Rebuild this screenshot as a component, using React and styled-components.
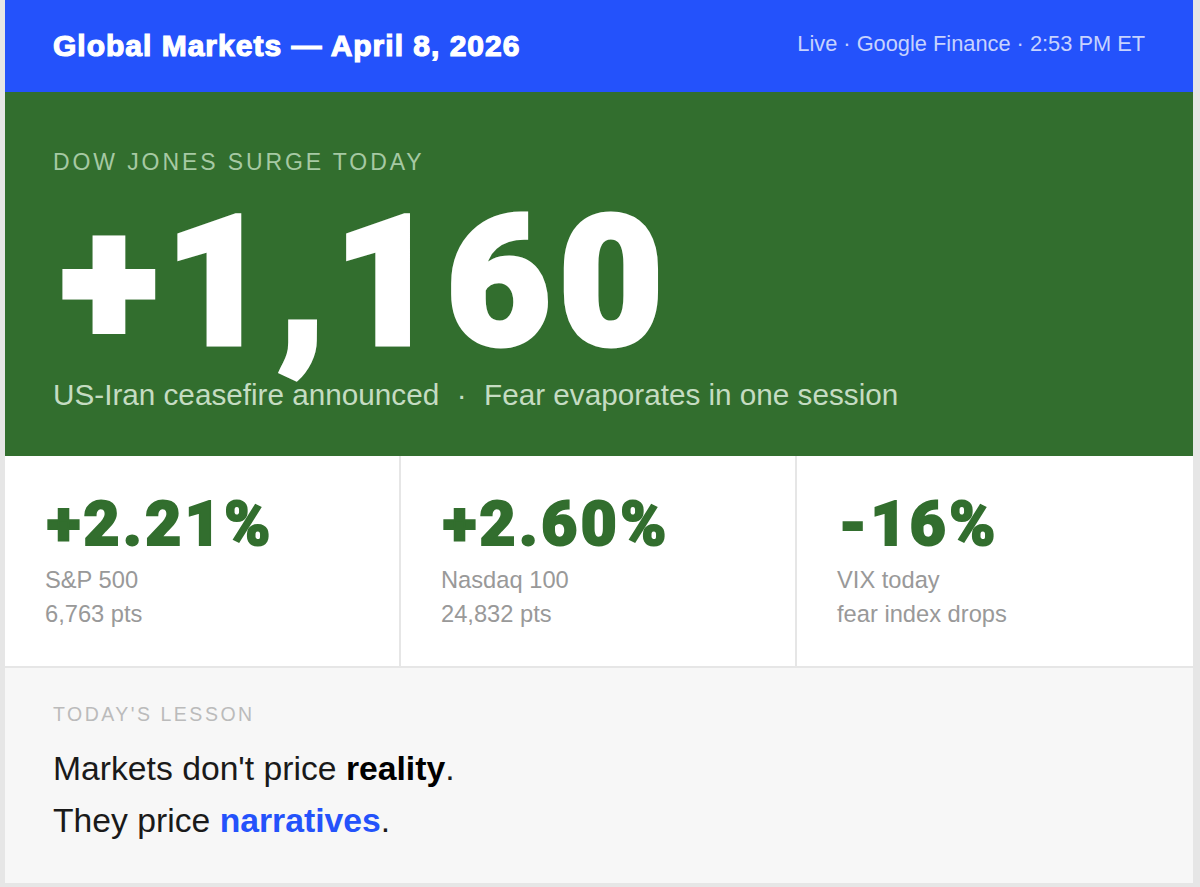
import React from 'react';
import styled, { createGlobalStyle } from 'styled-components';

const GlobalStyle = createGlobalStyle`
  * {
    box-sizing: border-box;
  }
  html, body {
    margin: 0;
    padding: 0;
    background: #e6e6e6;
    font-family: "Liberation Sans", Arial, sans-serif;
  }
`;

const Page = styled.div`
  width: 1200px;
  height: 887px;
  padding: 0 7px 4px 5px;
`;

const Card = styled.div`
  width: 1188px;
  height: 883px;
  background: #fff;
  display: flex;
  flex-direction: column;
`;

const Header = styled.header`
  height: 92px;
  background: #2452fb;
  display: flex;
  align-items: center;
  justify-content: space-between;
  padding: 0 48px;
`;

const Title = styled.h1`
  margin: 0;
  color: #fff;
  font-size: 30px;
  font-weight: 700;
  letter-spacing: 1px;
  -webkit-text-stroke: 1.2px #fff;
`;

const Source = styled.span`
  color: rgba(255, 255, 255, 0.75);
  font-size: 21.8px;
  margin-bottom: 4px;
`;

const Hero = styled.section`
  height: 364px;
  background: #326e2e;
  padding: 57px 48px 0;
`;

const Eyebrow = styled.div`
  color: #a6c9a3;
  font-size: 23px;
  line-height: 26px;
  letter-spacing: 2.9px;
`;

const BigNumber = styled.div`
  color: #fff;
  font-family: Roboto, "Liberation Sans", sans-serif;
  font-size: 180px;
  font-weight: 900;
  line-height: 186px;
  letter-spacing: 8px;
  -webkit-text-stroke: 5px #fff;
  margin-top: 15px;
  padding-left: 8px;
`;

const HeroNote = styled.div`
  color: #c5dcc2;
  font-size: 29.7px;
  line-height: 34px;
  margin-top: 2px;
  display: flex;
  gap: 17.5px;
`;

const Stats = styled.section`
  height: 212px;
  display: grid;
  grid-template-columns: repeat(3, 1fr);
  border-bottom: 2px solid #e6e6e6;
`;

const Stat = styled.div`
  padding: 33px 40px 0;
  border-right: ${(props) => (props.$last ? 'none' : '2px solid #e6e6e6')};
`;

const StatValue = styled.div`
  color: #326e2e;
  font-family: Roboto, "Liberation Sans", sans-serif;
  font-size: 62px;
  font-weight: 900;
  line-height: 70px;
  letter-spacing: 3.5px;
  -webkit-text-stroke: 2px #326e2e;
  margin-bottom: 4px;
  padding-left: 2px;
`;

const StatLabel = styled.div`
  color: #999;
  font-size: 23.7px;
  line-height: 34px;
`;

const Lesson = styled.section`
  flex: 1;
  background: #f7f7f7;
  padding: 34px 48px 0;
`;

const LessonTag = styled.div`
  color: #bbb;
  font-size: 19.5px;
  line-height: 24px;
  letter-spacing: 2.5px;
`;

const LessonLines = styled.div`
  margin-top: 16px;
  color: #1a1a1a;
  font-size: 33.7px;
  line-height: 52px;
`;

const Strong = styled.strong`
  color: ${(props) => props.$color};
  font-weight: 700;
`;

const stats = [
  { value: '+2.21%', label: 'S&P 500', sub: '6,763 pts' },
  { value: '+2.60%', label: 'Nasdaq 100', sub: '24,832 pts' },
  { value: '-16%', label: 'VIX today', sub: 'fear index drops' },
];

const App = () => {
  return (
    <Page>
      <GlobalStyle />
      <Card>
        <Header>
          <Title>Global Markets — April 8, 2026</Title>
          <Source>Live · Google Finance · 2:53 PM ET</Source>
        </Header>
        <Hero>
          <Eyebrow>DOW JONES SURGE TODAY</Eyebrow>
          <BigNumber>+1,160</BigNumber>
          <HeroNote>
            <span>US-Iran ceasefire announced</span>
            <span>·</span>
            <span>Fear evaporates in one session</span>
          </HeroNote>
        </Hero>
        <Stats>
          {stats.map((stat, i) => (
            <Stat key={stat.label} $last={i === stats.length - 1}>
              <StatValue>{stat.value}</StatValue>
              <StatLabel>{stat.label}</StatLabel>
              <StatLabel>{stat.sub}</StatLabel>
            </Stat>
          ))}
        </Stats>
        <Lesson>
          <LessonTag>TODAY'S LESSON</LessonTag>
          <LessonLines>
            <div>
              Markets don't price <Strong $color="#000">reality</Strong>.
            </div>
            <div>
              They price <Strong $color="#2452fb">narratives</Strong>.
            </div>
          </LessonLines>
        </Lesson>
      </Card>
    </Page>
  );
};

export default App;
